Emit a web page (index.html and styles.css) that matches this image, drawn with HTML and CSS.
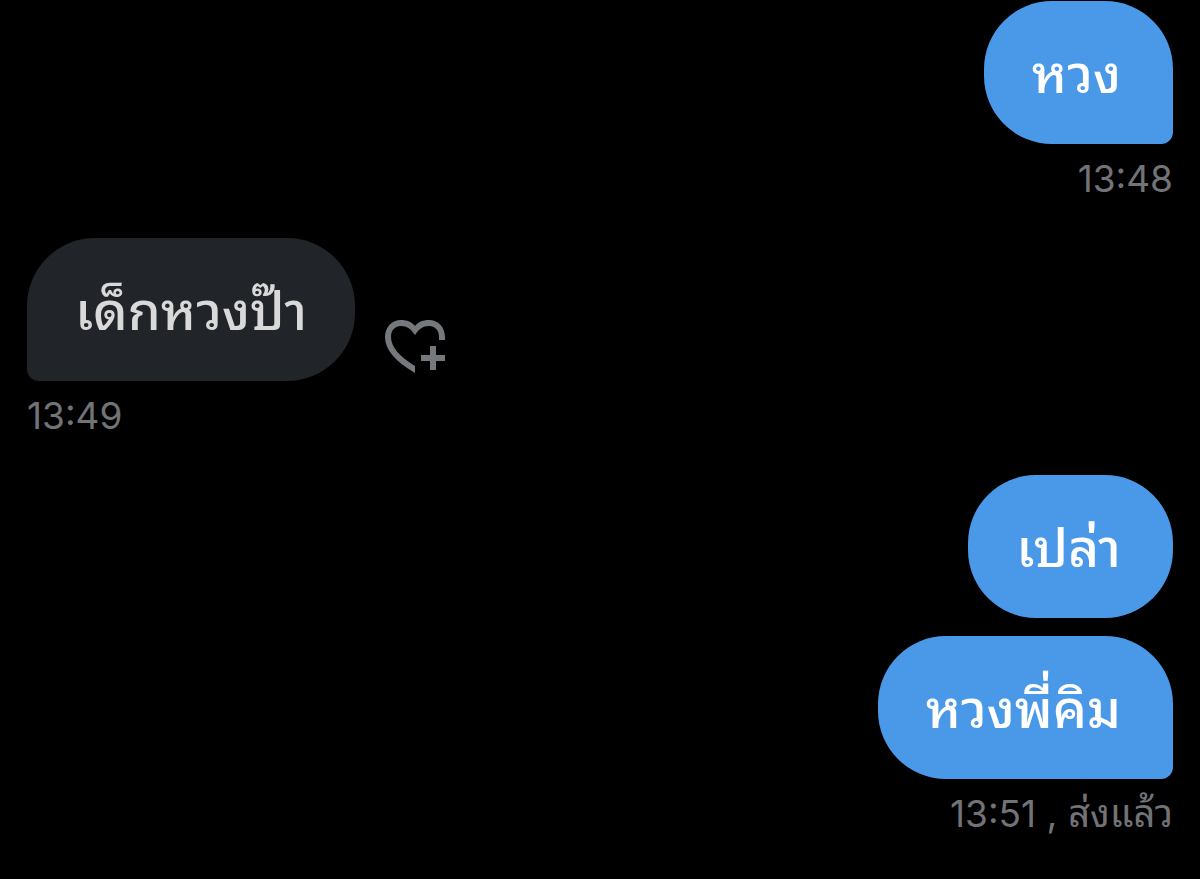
FILE: index.html
```html
<!DOCTYPE html>
<html lang="th">
<head>
  <meta charset="utf-8">
  <meta name="viewport" content="width=device-width, initial-scale=1">
  <title>Messages</title>
  <link rel="stylesheet" href="styles.css">
</head>
<body>
  <main class="chat">
    <section class="group sent">
      <p class="bubble tail">หวง</p>
      <div class="meta"><time>13:48</time></div>
    </section>
    <section class="group received">
      <div class="row">
        <p class="bubble tail">เด็กหวงป๊า</p>
        <button class="react" type="button" aria-label="React">
          <svg viewBox="0 0 60 53" width="60" height="53" fill="currentColor">
            <path d="M30 53C11 42 0 30 0 17C0 7 7 0 16 0C22 0 27 2 30 6C33 2 38 0 44 0C53 0 60 7 60 17V20H54V17C54 10 50 6 44 6C38 6 34 9 30 15C26 9 22 6 16 6C10 6 6 10 6 17C6 27 15 37 30 46Z"/>
            <path d="M45 26h6v9h9v6h-9v9h-6v-9h-9v-6h9z"/>
          </svg>
        </button>
      </div>
      <div class="meta"><time>13:49</time></div>
    </section>
    <section class="group sent">
      <p class="bubble">เปล่า</p>
      <p class="bubble tail">หวงพี่คิม</p>
      <div class="meta"><time>13:51</time> <span class="status">, ส่งแล้ว</span></div>
    </section>
  </main>
</body>
</html>
```
FILE: styles.css
```css
body {
  margin: 0;
  background-color: #000;
  font-family: Inter, "Noto Sans Thai Looped", "Noto Looped Thai", Loma, Waree, Garuda, Tahoma, sans-serif;
}

.chat {
  display: flex;
  flex-direction: column;
  gap: 36px;
  padding: 1px 27px;
}

.group {
  display: flex;
  flex-direction: column;
}

.sent {
  align-items: flex-end;
}

.received {
  align-items: flex-start;
}

.row {
  display: flex;
  align-items: flex-end;
  gap: 30px;
}

.bubble {
  box-sizing: border-box;
  margin: 0;
  padding: 37px 52px 34px 48px;
  border-radius: 68px;
  font-size: 53px;
  font-weight: 500;
  line-height: 72px;
  color: #fff;
  background-color: #4a99e9;
}

.bubble + .bubble {
  margin-top: 18px;
}

.sent .tail {
  border-bottom-right-radius: 12px;
}

.received .bubble {
  padding-right: 48px;
  color: #d9d9d9;
  background-color: #212428;
}

.received .tail {
  border-bottom-left-radius: 12px;
}

.react {
  padding: 0 0 8px;
  border: none;
  color: #75797e;
  background: none;
}

.react svg {
  display: block;
}

.meta {
  margin-top: 11px;
  font-size: 37px;
  line-height: 47px;
  color: #727377;
}

.status {
  font-size: 38px;
}
```
